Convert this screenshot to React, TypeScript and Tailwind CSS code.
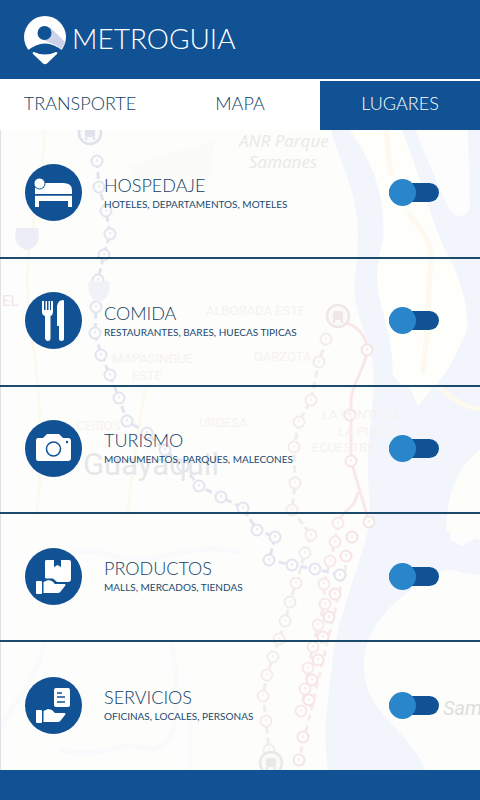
import type { ReactNode } from "react";

type Point = [number, number];

const BLUE_LINE: Point[] = [
  [97, 161], [99, 187], [106, 211], [110, 234], [104, 255], [98, 280], [96, 307], [95, 333],
  [101, 355], [110, 375], [119, 398], [127, 421], [147, 433], [165, 450], [183, 466], [199, 486],
  [221, 497], [243, 508], [257, 530], [275, 537], [269, 560], [292, 565], [315, 569], [340, 575],
];

const GREY_LINE: Point[] = [
  [326, 339], [319, 362], [311, 400], [299, 422], [294, 447], [295, 483], [292, 510], [311, 535],
  [305, 553], [296, 583], [290, 602], [285, 621], [279, 639], [273, 657], [267, 675], [263, 696],
  [266, 721], [269, 750],
];

const RED_LINE: Point[] = [
  [367, 350], [350, 415], [351, 461], [369, 522], [352, 537], [346, 556], [340, 575], [335, 594],
  [329, 617], [323, 637], [318, 660], [312, 680], [309, 700], [303, 737], [299, 760],
];

const RED_BRANCH: Point[] = [
  [338, 523], [335, 542], [330, 561], [324, 584], [325, 604], [318, 625], [313, 647], [308, 668],
  [305, 689], [301, 711],
];

function Stations({ points, color, line = true }: { points: Point[]; color: string; line?: boolean }) {
  return (
    <g stroke={color} fill="none">
      {line && <polyline points={points.map((p) => p.join(",")).join(" ")} strokeWidth="3" strokeDasharray="7 4" />}
      {points.map(([x, y]) => (
        <g key={`${x}-${y}`}>
          <circle cx={x} cy={y} r="5.5" fill="#fdfdfc" strokeWidth="2" />
          <path d={`M${x} ${y - 2}v2.5`} strokeWidth="1.5" />
        </g>
      ))}
    </g>
  );
}

function Terminal({ x, y, color }: { x: number; y: number; color: string }) {
  return (
    <g fill="none" stroke={color} strokeWidth="2.5">
      <circle cx={x} cy={y} r="11" fill="#fafaf8" />
      <rect x={x - 5} y={y - 5} width="10" height="9" rx="2" fill={color} stroke="none" />
      <path d={`M${x - 4} ${y + 4}v3M${x + 4} ${y + 4}v3`} />
    </g>
  );
}

function MapBackdrop() {
  return (
    <svg
      className="absolute inset-0 size-full"
      viewBox="0 130 480 640"
      preserveAspectRatio="xMidYMid slice"
      aria-hidden="true"
    >
      <rect y="130" width="480" height="640" fill="#fdfdfb" />
      <path
        d="M331 130C340 165 358 190 358 235S348 285 362 325S376 370 370 430S374 500 368 530S336 620 332 665S322 720 328 770H425C410 730 366 715 364 670S395 600 425 580S455 576 480 574V130Z"
        fill="#f3f5fd"
      />
      <path
        d="M350 130C370 160 386 190 383 240C378 262 374 275 380 300S392 340 393 375Q400 386 410 388L418 406L432 388C448 375 458 350 465 335S462 280 448 255S425 190 402 130Z"
        fill="#fefefb"
      />
      <path d="M415 130C428 160 444 200 450 210S468 216 470 208L468 130Z" fill="#fcfdfc" />
      <path d="M450 516V540L462 546L480 536V516Z" fill="#fcfdfc" />
      <path d="M480 450C462 462 446 490 446 530L480 540Z" fill="#fdfdfa" />
      <path d="M130 165L215 140L210 180L140 190Z" fill="#fbfcf9" />
      <g fill="none" stroke="#fdf9ee" strokeWidth="5">
        <path d="M386 130L391 176M408 212C420 230 433 240 431 260S428 330 423 374" />
        <path d="M45 130C40 220 20 250 30 320S45 460 36 516" strokeWidth="3" />
        <path d="M145 388C140 430 130 470 128 516" strokeWidth="3" />
        <path d="M440 388C460 405 470 408 480 409" />
      </g>
      <g fill="none" stroke="#f8fafc" strokeWidth="5">
        <path d="M30 560C70 575 60 540 110 555S180 540 240 552" />
        <path d="M44 643C34 690 0 720 0 730M60 750C110 760 110 740 145 748S180 700 172 643M190 700L190 770" />
      </g>
      <path
        d="M338 322C355 322 367 335 367 350S351 385 351 400V461L369 522M358 492C354 512 345 505 338 523"
        fill="none"
        stroke="#f9e8e8"
        strokeWidth="3"
      />
      <Stations points={RED_BRANCH} color="#f8e8e8" />
      <path d="M346 565L299 760" stroke="#f9ebeb" strokeWidth="3" strokeDasharray="6 5" />
      <Stations points={RED_LINE} color="#f6e4e4" line={false} />
      <Stations points={GREY_LINE} color="#f2ecea" />
      <Stations points={BLUE_LINE} color="#e2e4ef" />
      <Terminal x={90} y={133} color="#dfe2ed" />
      <Terminal x={338} y={316} color="#efe7e5" />
      <Terminal x={271} y={763} color="#e9e9e4" />
      <path d="M16 228H38C40 240 38 247 27 250C16 247 14 240 16 228Z" fill="#ecedf6" />
      <path d="M89 281H109C111 292 108 299 99 302C90 299 87 292 89 281Z" fill="#f1f2f7" />
      <g className="font-['Open_Sans',sans-serif]" fill="#e9e9e6">
        <text x="239" y="147" fontSize="17" fontStyle="italic">ANR Parque</text>
        <text x="249" y="168" fontSize="17" fontStyle="italic">Samanes</text>
      </g>
      <g className="font-['Roboto',sans-serif]">
        <text x="83" y="475" fontSize="31" fill="#e7e7ea">Guayaquil</text>
        <text x="443" y="715" fontSize="20" fontStyle="italic" fill="#dededb">Sam</text>
        <text x="2" y="306" fontSize="15" fill="#f1e6e4">EL</text>
      </g>
      <g className="font-['Roboto',sans-serif]" fill="#f6f2ef" fontSize="13">
        <text x="206" y="315">ALBORADA ESTE</text>
        <text x="254" y="361">GARZOTA</text>
        <text x="112" y="363">MAPASINGUE</text>
        <text x="132" y="380">ESTE</text>
        <text x="76" y="430">CEIBOS</text>
        <text x="199" y="427">URDESA</text>
        <text x="322" y="419">LA PUNTILLA</text>
        <text x="338" y="436">LA PUNTA</text>
        <text x="312" y="452">ECUESTRE</text>
      </g>
      <path d="M.5 130V770" stroke="#dfe3e8" />
    </svg>
  );
}

function Logo() {
  return (
    <svg className="h-[50px] w-[42px] shrink-0" viewBox="0 0 42 50" aria-hidden="true">
      <circle cx="21" cy="22" r="21" fill="#fff" />
      <path d="M26 12L41 27Q40 31 37 34Q31 29 26 28L18 24Z" fill="#ccd2ea" />
      <circle cx="20.5" cy="18" r="7" fill="#105293" />
      <path d="M3 36C9 31 15 28.500 21 28.500S33 31 39 36V50H3Z" fill="#105293" />
      <path d="M10 37Q21 42 32 37Q34 37 33 39L23 48.500Q21 50 19 48.500L9 39Q8 37 10 37Z" fill="#fff" />
    </svg>
  );
}

const HAND = (
  <>
    <rect x="11" y="33" width="6" height="13" rx="1" fill="#fff" />
    <path d="M18.500 34L23 32L27 33L30 36H40Q41 37 40 38L36 43Q35 45 33 45H18.500Z" fill="#fff" />
  </>
);

const BED = (
  <>
    <path d="M10 21V43H14V37H43V43H47V31H10ZM19 19H38Q47 19 47 26V30H19Z" fill="#fff" />
    <path d="M10 24H20V30H10Z" fill="#fff" />
    <circle cx="14.5" cy="19.5" r="5.5" fill="#fff" stroke="#105293" strokeWidth="1" />
    <path d="M9 31H48" stroke="#105293" strokeWidth="1.500" />
  </>
);

const CUTLERY = (
  <>
    <path d="M17 9H19V18H20.500V9H22V18H23.500V9H25V18H26V9H28V20Q28 23 25.500 24V46Q25.500 49 23 49T20 46V24Q17 23 17 20Z" fill="#fff" />
    <path d="M32 14Q33 8 38 8Q39 8 39 9V47Q39 49 36.500 49T34 47V34H32Z" fill="#fff" />
  </>
);

const CAMERA = (
  <>
    <path d="M13 18H18L22 14H34L38 18H43Q46 18 46 21V38Q46 41 43 41H13Q11 41 11 38V21Q11 18 13 18Z" fill="#fff" />
    <circle cx="28.5" cy="29" r="7" fill="none" stroke="#105293" strokeWidth="1.500" />
    <circle cx="42" cy="22" r="1.200" fill="#105293" />
  </>
);

const PACKAGE = (
  <>
    <path d="M21 12H29V19L32.500 17L36 19V12H44Q46 12 46 14V31Q46 34 43 34H32L28 30.500H21Q20 30.500 20 29V14Q20 12 21 12Z" fill="#fff" />
    {HAND}
  </>
);

const DOCUMENT = (
  <>
    <rect x="29" y="11" width="16" height="19" rx="2" fill="#fff" />
    <path d="M32 16H37M32 20H40M32 25H40" stroke="#105293" strokeWidth="1.500" />
    {HAND}
  </>
);

interface Category {
  id: string;
  title: string;
  detail: string;
  icon: ReactNode;
}

const CATEGORIES: Category[] = [
  { id: "hospedaje", title: "HOSPEDAJE", detail: "HOTELES, DEPARTAMENTOS, MOTELES", icon: BED },
  { id: "comida", title: "COMIDA", detail: "RESTAURANTES, BARES, HUECAS TIPICAS", icon: CUTLERY },
  { id: "turismo", title: "TURISMO", detail: "MONUMENTOS, PARQUES, MALECONES", icon: CAMERA },
  { id: "productos", title: "PRODUCTOS", detail: "MALLS, MERCADOS, TIENDAS", icon: PACKAGE },
  { id: "servicios", title: "SERVICIOS", detail: "OFICINAS, LOCALES, PERSONAS", icon: DOCUMENT },
];

function CategoryRow({ id, title, detail, icon }: Category) {
  return (
    <li className="flex min-h-[127px] items-center border-b-2 border-[#1b4a6b] pr-[41px] pb-[2px] pl-[25px] last:border-b-0">
      <svg className="size-[57px] shrink-0" viewBox="0 0 57 57" aria-hidden="true">
        <circle cx="28.5" cy="28.5" r="28.5" fill="#105293" />
        {icon}
      </svg>
      <label htmlFor={id} className="ml-[22px] flex-1 text-[#1b4a70]">
        <span className="block text-[18px] leading-[22px] font-light text-[#123f66]">{title}</span>
        <span className="block text-[10px] leading-4">{detail}</span>
      </label>
      <input
        id={id}
        type="checkbox"
        role="switch"
        className="relative h-[27px] w-[50px] shrink-0 cursor-pointer appearance-none before:absolute before:inset-x-0 before:inset-y-1 before:rounded-full before:bg-[#105293] after:absolute after:left-0 after:size-[27px] after:rounded-full after:bg-[#2a86cb] checked:after:left-[23px]"
      />
    </li>
  );
}

export default function App() {
  return (
    <div className="flex min-h-screen flex-col bg-white font-['Lato',sans-serif]">
      <header className="flex h-[79px] items-center gap-[6px] bg-[#105293] pl-6 text-white">
        <Logo />
        <h1 className="pb-1 text-[28px] leading-10 font-light">METROGUIA</h1>
      </header>
      <nav className="mt-[2px] grid h-[49px] grid-cols-3 text-[18px] font-light text-[#123f66]">
        <button type="button" className="cursor-pointer pb-1">TRANSPORTE</button>
        <button type="button" className="cursor-pointer pb-1">MAPA</button>
        <button type="button" aria-current="page" className="cursor-pointer bg-[#105293] pb-1 text-white">LUGARES</button>
      </nav>
      <main className="relative flex flex-1 flex-col">
        <MapBackdrop />
        <ul className="relative grid flex-1 auto-rows-fr pt-px">
          {CATEGORIES.map((category) => (
            <CategoryRow key={category.id} {...category} />
          ))}
        </ul>
      </main>
      <footer className="h-[30px] bg-[#105293]" />
    </div>
  );
}
